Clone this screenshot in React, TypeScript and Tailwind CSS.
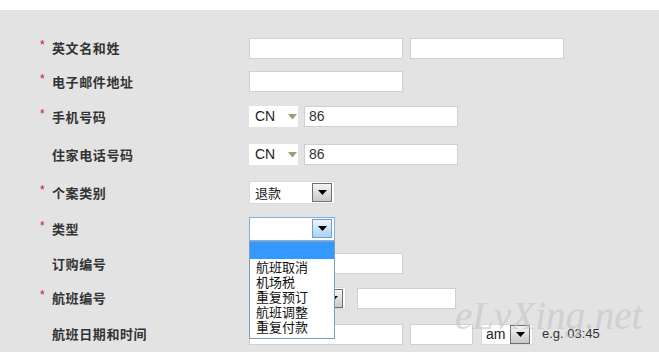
import React from "react";

const FONT = "font-['Liberation_Sans','Noto_Sans_CJK_SC',sans-serif]";

function Label({ text, req }: { text: string; req?: boolean }) {
  return (
    <div className="w-[249px] shrink-0 flex items-center pl-[40px]">
      <span className="w-[12px] text-[12px] text-[#c8102e] relative -top-[3px]">{req ? "*" : ""}</span>
      <span className="text-[13px] font-bold tracking-[0.6px] text-[#333] font-['Noto_Sans_CJK_SC',sans-serif]">{text}</span>
    </div>
  );
}

function Input({ w, value }: { w: string; value?: string }) {
  return (
    <div className={`${w} h-[21px] bg-white border border-[#d0d0d0] flex items-center pl-[4px] text-[14px] text-[#333] shrink-0`}>
      {value}
    </div>
  );
}

function CnSelect() {
  return (
    <div className="w-[49px] h-[21px] bg-white flex items-center pl-[6px] text-[14px] text-[#222] shrink-0">
      <span>CN</span>
      <svg width="9" height="6" viewBox="0 0 9 6" className="ml-[13px] mt-[1px]">
        <path d="M0 0 L9 0 L4.5 5.5 Z" fill="#a39d6e" />
      </svg>
    </div>
  );
}

function Arrow({ blue }: { blue?: boolean }) {
  return (
    <div
      className={`w-[20px] h-[19px] border flex items-center justify-center shrink-0 ${
        blue
          ? "border-[#6d9fcf] bg-gradient-to-b from-[#eef6fd] to-[#a8d2f4]"
          : "border-[#707070] bg-gradient-to-b from-[#f5f5f5] to-[#c9c9c9]"
      }`}
    >
      <svg width="9" height="5" viewBox="0 0 9 5">
        <path d="M0 0 L9 0 L4.5 5 Z" fill="#000" />
      </svg>
    </div>
  );
}

function GraySelect({ w, h, value, focused }: { w: string; h: string; value?: string; focused?: boolean }) {
  return (
    <div
      className={`${w} ${h} bg-white border ${focused ? "border-[#7db2e6]" : "border-[#dadada]"} flex items-center justify-between pl-[5px] pr-[2px] text-[13px] text-[#222] shrink-0 font-['Noto_Sans_CJK_SC',sans-serif]`}
    >
      <span>{value}</span>
      <Arrow blue={focused} />
    </div>
  );
}

function Row({ h, children }: { h: string; children: React.ReactNode }) {
  return <div className={`${h} flex items-center`}>{children}</div>;
}

export default function App() {
  const items = ["航班取消", "机场税", "重复预订", "航班调整", "重复付款"];
  return (
    <div className={`w-[659px] h-[352px] bg-white overflow-hidden relative ${FONT}`}>
      <div className="mt-[10px] h-[342px] bg-[#e3e3e3] pt-[21px]">
        <Row h="h-[34px]">
          <Label text="英文名和姓" req />
          <div className="flex gap-[7px]">
            <Input w="w-[154px]" />
            <Input w="w-[154px]" />
          </div>
        </Row>
        <Row h="h-[33px]">
          <Label text="电子邮件地址" req />
          <Input w="w-[154px]" />
        </Row>
        <Row h="h-[37px]">
          <Label text="手机号码" req />
          <div className="flex gap-[6px]">
            <CnSelect />
            <Input w="w-[154px]" value="86" />
          </div>
        </Row>
        <Row h="h-[39px]">
          <Label text="住家电话号码" />
          <div className="flex gap-[6px]">
            <CnSelect />
            <Input w="w-[154px]" value="86" />
          </div>
        </Row>
        <Row h="h-[37px]">
          <Label text="个案类别" req />
          <GraySelect w="w-[86px]" h="h-[23px]" value="退款" />
        </Row>
        <Row h="h-[35px]">
          <Label text="类型" req />
          <div className="relative z-10">
            <GraySelect w="w-[86px]" h="h-[24px]" focused />
            <div className="absolute left-0 top-full w-[86px] bg-white border border-[#7f9db9] pb-[4px] font-['Noto_Sans_CJK_SC',sans-serif]">
              <div className="h-[17px] bg-[#3399ff]" />
              {items.map((t) => (
                <div key={t} className="h-[15px] leading-[15px] text-[13px] text-[#111] pl-[6px]">
                  {t}
                </div>
              ))}
            </div>
          </div>
        </Row>
        <Row h="h-[35px]">
          <Label text="订购编号" />
          <Input w="w-[154px]" />
        </Row>
        <Row h="h-[34px]">
          <Label text="航班编号" req />
          <div className="flex gap-[11px] items-center">
            <GraySelect w="w-[97px]" h="h-[22px]" />
            <Input w="w-[99px]" />
          </div>
        </Row>
        <Row h="h-[38px]">
          <Label text="航班日期和时间" />
          <div className="flex items-center">
            <Input w="w-[154px]" />
            <div className="w-[7px]" />
            <Input w="w-[63px]" />
            <div className="w-[8px]" />
            <div className="w-[52px] h-[21px] bg-white border border-[#dadada] flex items-center justify-between pl-[4px] pr-[2px] text-[14px] text-[#222]">
              <span>am</span>
              <Arrow />
            </div>
            <span className="ml-[9px] text-[13px] text-[#333]">e.g. 03:45</span>
          </div>
        </Row>
      </div>
      <div className="absolute left-[455px] top-[294px] leading-[44px] text-[39px] italic text-[#c4c4c4] opacity-60 font-['Liberation_Serif',serif] pointer-events-none z-20">
        eLvXing.net
      </div>
    </div>
  );
}
